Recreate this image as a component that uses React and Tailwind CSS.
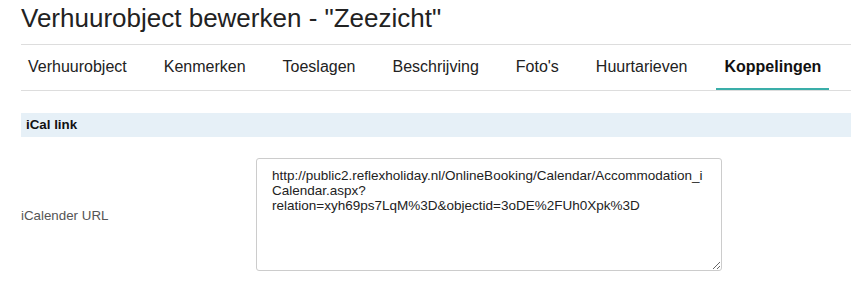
/**
 * App.jsx
 * Verhuurobject bewerken — tab Koppelingen
 */

const TABS = ['Verhuurobject', 'Kenmerken', 'Toeslagen', 'Beschrijving', "Foto's", 'Huurtarieven', 'Koppelingen']
const ACTIVE = 'Koppelingen'

const ICAL_URL =
  'http://public2.reflexholiday.nl/OnlineBooking/Calendar/Accommodation_iCalendar.aspx?relation=xyh69ps7LqM%3D&objectid=3oDE%2FUh0Xpk%3D'

export default function App() {
  return (
    <div className="w-[851px] h-[292px] overflow-hidden bg-white pl-[21px] font-['Liberation_Sans',Arial,sans-serif] text-[#222]">
      {/* Titel */}
      <h1 className="mt-[3px] text-[26px] leading-[30px] font-normal whitespace-nowrap">
        Verhuurobject bewerken - "Zeezicht"
      </h1>

      {/* Tabs */}
      <nav className="mt-[11px] flex gap-[21px] border-y border-[#dddddd]">
        {TABS.map(t => (
          <div
            key={t}
            className={`px-2 pt-3 pb-[11px] text-[16px] leading-5 border-b-2 whitespace-nowrap first:-ml-px ${
              t === ACTIVE ? 'border-[#3aaea9] font-bold text-[#111]' : 'border-transparent text-[#222]'
            }`}
          >
            {t}
          </div>
        ))}
      </nav>

      {/* Sectie */}
      <div className="mt-[22px] h-6 bg-[#e6f0f7] pl-[5px] flex items-center">
        <span className="text-[13.33px] font-bold text-[#111]">iCal link</span>
      </div>

      {/* Formulier */}
      <div className="mt-[21px] flex items-center">
        <label className="w-[235px] pt-[2px] text-[13.33px] text-[#555]">iCalender URL</label>
        <textarea
          defaultValue={ICAL_URL}
          className="w-[466px] h-[113px] border border-[#cccccc] rounded-[3px] pl-[15px] pr-[18px] pt-[9px] text-[13.5px] leading-[15px] text-[#222] font-['Liberation_Sans',Arial,sans-serif] outline-none"
        />
      </div>
    </div>
  )
}
